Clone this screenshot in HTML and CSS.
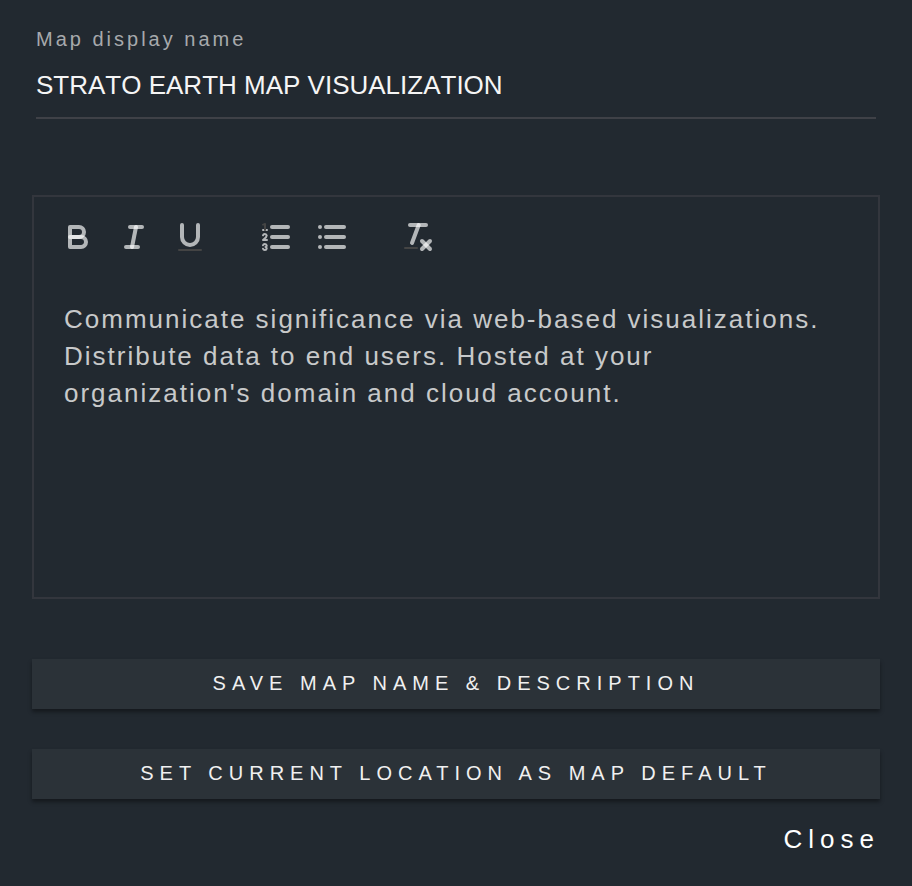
FILE: index.html
```html
<!DOCTYPE html>
<html lang="en">
<head>
    <meta charset="UTF-8">
    <meta name="viewport" content="width=device-width, initial-scale=1.0">
    <title>Map settings</title>
    <link rel="stylesheet" href="styles.css">
</head>
<body>
    <form class="map-form">
        <div class="field">
            <label for="mapName">Map display name</label>
            <input type="text" id="mapName" name="mapName" value="STRATO EARTH MAP VISUALIZATION">
        </div>

        <div class="editor">
            <div class="toolbar">
                <div class="tool-group">
                    <button type="button" class="tool" aria-label="Bold">
                        <svg viewBox="0 0 18 18">
                            <path class="stroke" d="M5,4H9.5A2.5,2.5,0,0,1,12,6.5v0A2.5,2.5,0,0,1,9.5,9H5Z"/>
                            <path class="stroke" d="M5,9h5.5A2.5,2.5,0,0,1,13,11.5v0A2.5,2.5,0,0,1,10.5,14H5Z"/>
                        </svg>
                    </button>
                    <button type="button" class="tool" aria-label="Italic">
                        <svg viewBox="0 0 18 18">
                            <line class="stroke" x1="7" x2="13" y1="4" y2="4"/>
                            <line class="stroke" x1="5" x2="11" y1="14" y2="14"/>
                            <line class="stroke" x1="8" x2="10" y1="14" y2="4"/>
                        </svg>
                    </button>
                    <button type="button" class="tool" aria-label="Underline">
                        <svg viewBox="0 0 18 18">
                            <path class="stroke" d="M5,3V9a4.012,4.012,0,0,0,4,4H9a4.012,4.012,0,0,0,4-4V3"/>
                            <rect class="fill" x="3" y="15" width="12" height="1" rx="0.5"/>
                        </svg>
                    </button>
                </div>
                <div class="tool-group">
                    <button type="button" class="tool" aria-label="Numbered list">
                        <svg viewBox="0 0 18 18">
                            <line class="stroke" x1="7" x2="15" y1="4" y2="4"/>
                            <line class="stroke" x1="7" x2="15" y1="9" y2="9"/>
                            <line class="stroke" x1="7" x2="15" y1="14" y2="14"/>
                            <line class="stroke thin" x1="2.5" x2="4.5" y1="5.5" y2="5.5"/>
                            <path class="fill" d="M3.5,6A0.5,0.5,0,0,1,3,5.5V3.085l-0.276.138A0.5,0.5,0,0,1,2.053,3c-0.124-.247-0.023-0.324.224-0.447l1-.5A0.5,0.5,0,0,1,4,2.5v3A0.5,0.5,0,0,1,3.5,6Z"/>
                            <path class="stroke thin" d="M4.5,10.5h-2c0-.234,1.85-1.076,1.85-2.234A0.959,0.959,0,0,0,2.5,8.156"/>
                            <path class="stroke thin" d="M2.5,14.846a0.959,0.959,0,0,0,1.85-.109A0.7,0.7,0,0,0,3.75,14a0.688,0.688,0,0,0,.6-0.736,0.959,0.959,0,0,0-1.85-.109"/>
                        </svg>
                    </button>
                    <button type="button" class="tool" aria-label="Bulleted list">
                        <svg viewBox="0 0 18 18">
                            <line class="stroke" x1="6" x2="15" y1="4" y2="4"/>
                            <line class="stroke" x1="6" x2="15" y1="9" y2="9"/>
                            <line class="stroke" x1="6" x2="15" y1="14" y2="14"/>
                            <line class="stroke" x1="3" x2="3" y1="4" y2="4"/>
                            <line class="stroke" x1="3" x2="3" y1="9" y2="9"/>
                            <line class="stroke" x1="3" x2="3" y1="14" y2="14"/>
                        </svg>
                    </button>
                </div>
                <div class="tool-group">
                    <button type="button" class="tool" aria-label="Clear formatting">
                        <svg viewBox="0 0 18 18">
                            <line class="stroke" x1="5" x2="13" y1="3" y2="3"/>
                            <line class="stroke" x1="6" x2="9.35" y1="12" y2="3"/>
                            <line class="stroke" x1="11" x2="15" y1="11" y2="15"/>
                            <line class="stroke" x1="15" x2="11" y1="11" y2="15"/>
                            <rect class="fill" x="2" y="14" width="7" height="1" rx="0.5"/>
                        </svg>
                    </button>
                </div>
            </div>
            <textarea class="description" name="description" aria-label="Map description">Communicate significance via web-based visualizations. Distribute data to end users. Hosted at your organization's domain and cloud account.</textarea>
        </div>

        <div class="actions">
            <button type="submit" class="btn">SAVE MAP NAME &amp; DESCRIPTION</button>
            <button type="button" class="btn">SET CURRENT LOCATION AS MAP DEFAULT</button>
        </div>
        <button type="button" class="close-btn">Close</button>
    </form>
</body>
</html>
```
FILE: styles.css
```css
* {
    box-sizing: border-box;
}

body {
    margin: 0;
    background-color: #222930;
    color: #fff;
    font-family: "Liberation Sans", Arial, sans-serif;
}

button,
input,
textarea {
    margin: 0;
    padding: 0;
    border: none;
    border-radius: 0;
    outline: none;
    background: none;
    color: inherit;
    font-family: inherit;
}

button {
    cursor: pointer;
}

.map-form {
    display: flex;
    flex-direction: column;
    padding: 28px 32px;
}

.field {
    display: flex;
    flex-direction: column;
    margin: 0 4px 76px;
}

.field label {
    color: #a7a9ac;
    font-size: 20px;
    line-height: 22px;
    letter-spacing: 3px;
}

.field input {
    height: 69px;
    padding-top: 4px;
    border-bottom: 2px solid #3f4147;
    color: #f5f5f5;
    font-size: 26px;
    font-kerning: none;
}

.editor {
    border: 2px solid #33363d;
}

.toolbar {
    display: flex;
    gap: 30px;
    padding: 16px;
}

.tool-group {
    display: flex;
}

.tool {
    width: 56px;
    height: 48px;
    padding: 6px 10px;
}

.tool svg {
    display: block;
    width: 36px;
    height: 36px;
}

.stroke {
    fill: none;
    stroke: rgba(255, 255, 255, 0.66);
    stroke-linecap: round;
    stroke-linejoin: round;
    stroke-width: 2;
}

.thin {
    stroke-width: 1;
}

.fill {
    fill: #444;
}

.description {
    display: block;
    width: 100%;
    height: 320px;
    padding: 24px 30px;
    color: #c8c9ca;
    font-size: 26px;
    line-height: 37px;
    letter-spacing: 2px;
    resize: none;
}

.actions {
    display: flex;
    flex-direction: column;
    gap: 40px;
    margin-top: 60px;
}

.btn {
    height: 50px;
    padding-bottom: 2px;
    background-color: #2b3238;
    box-shadow: 0 3px 4px rgba(0, 0, 0, 0.4);
    color: #f0f0f0;
    font-size: 20px;
    letter-spacing: 6px;
}

.close-btn {
    align-self: flex-end;
    margin-top: 24px;
    font-size: 26px;
    line-height: 32px;
    letter-spacing: 6px;
}
```
